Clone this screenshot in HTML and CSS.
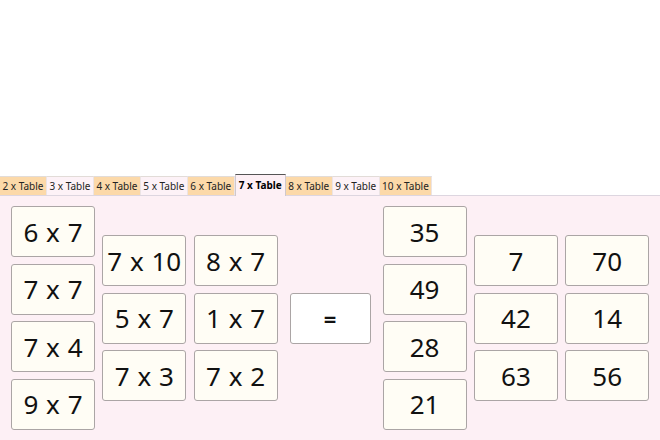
FILE: index.html
```html
<!DOCTYPE html>
<html>
<head>
<meta charset="utf-8">
<link rel="stylesheet" href="styles.css">
</head>
<body>
<div class="top"></div>
<div class="tabs">
  <div class="tab odd">2 x Table</div>
  <div class="tab even">3 x Table</div>
  <div class="tab odd">4 x Table</div>
  <div class="tab even">5 x Table</div>
  <div class="tab odd">6 x Table</div>
  <div class="tab active">7 x Table</div>
  <div class="tab odd">8 x Table</div>
  <div class="tab even">9 x Table</div>
  <div class="tab odd">10 x Table</div>
</div>
<div class="panel">
  <div class="group">
    <div class="col">
      <div class="card">6 x 7</div>
      <div class="card">7 x 7</div>
      <div class="card">7 x 4</div>
      <div class="card">9 x 7</div>
    </div>
    <div class="col">
      <div class="card">7 x 10</div>
      <div class="card">5 x 7</div>
      <div class="card">7 x 3</div>
    </div>
    <div class="col">
      <div class="card">8 x 7</div>
      <div class="card">1 x 7</div>
      <div class="card">7 x 2</div>
    </div>
  </div>
  <div class="card equals">=</div>
  <div class="group">
    <div class="col">
      <div class="card">35</div>
      <div class="card">49</div>
      <div class="card">28</div>
      <div class="card">21</div>
    </div>
    <div class="col">
      <div class="card">7</div>
      <div class="card">42</div>
      <div class="card">63</div>
    </div>
    <div class="col">
      <div class="card">70</div>
      <div class="card">14</div>
      <div class="card">56</div>
    </div>
  </div>
</div>
</body>
</html>
```
FILE: styles.css
```css
html, body {
  margin: 0;
  padding: 0;
  background: #ffffff;
  font-family: "Noto Sans", "Open Sans", sans-serif;
}
.top {
  height: 174px;
}
.tabs {
  display: flex;
  align-items: flex-end;
  height: 21px;
}
.tab {
  box-sizing: border-box;
  height: 19px;
  padding: 0 2.5px;
  font-size: 10px;
  line-height: 18px;
  color: #222;
  border-top: 1px solid #e2dcd8;
  border-right: 1px solid #ece4e4;
  white-space: nowrap;
}
.tab.odd {
  background: #fcd9a9;
}
.tab.even {
  background: #fdf2f7;
}
.tab.active {
  height: 22px;
  margin-bottom: -1px;
  position: relative;
  background: #fdf0f5;
  border-top: 1px solid #555;
  border-left: 1px solid #cfc8cc;
  border-right: 1px solid #cfc8cc;
  font-weight: bold;
  color: #000;
  padding: 0 3px;
  line-height: 20px;
}
.panel {
  box-sizing: border-box;
  height: 245px;
  background: #fdf0f5;
  border-top: 1px solid #ddd6e0;
  display: flex;
  align-items: center;
  padding: 0 0 0 11px;
  gap: 12px;
}
.group {
  display: flex;
  align-items: center;
  gap: 7.3px;
}
.col {
  display: flex;
  flex-direction: column;
  gap: 6.5px;
}
.card {
  box-sizing: border-box;
  width: 84px;
  height: 51px;
  background: #fffdf5;
  border: 1px solid #aba5a5;
  border-radius: 3px;
  display: flex;
  align-items: center;
  justify-content: center;
  font-size: 26px;
  color: #111;
  white-space: pre;
  word-spacing: 1px;
}
.card.equals {
  width: 81px;
  background: #ffffff;
  font-weight: bold;
  font-size: 22px;
}
```
